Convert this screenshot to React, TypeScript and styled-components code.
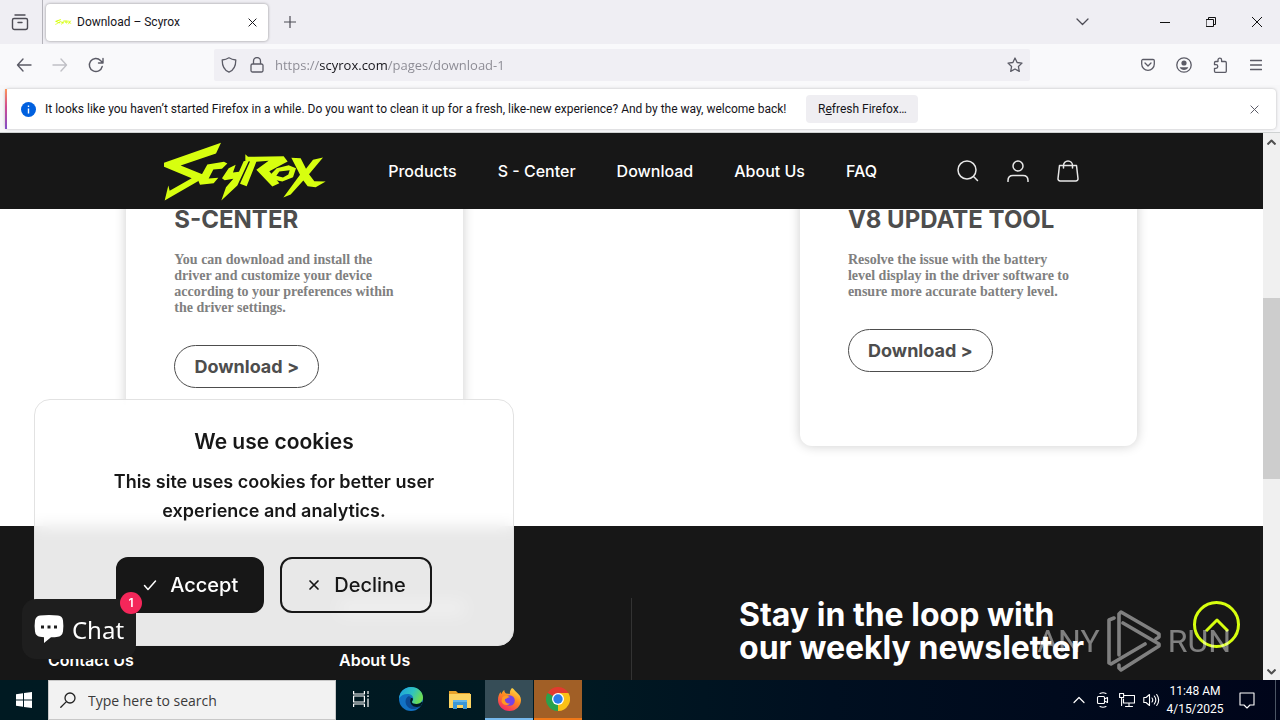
import React from 'react';
import styled, { createGlobalStyle } from 'styled-components';

const ui = "'Open Sans', 'Noto Sans', sans-serif";
const uiSmall = "Roboto, 'Open Sans', sans-serif";
const site = "Inter, 'Liberation Sans', sans-serif";
const lime = '#d7ff0f';

const GlobalStyle = createGlobalStyle`
  *, *::before, *::after { box-sizing: border-box; }
  body { margin: 0; font-family: ${ui}; overflow: hidden; }
  button, input { font: inherit; color: inherit; }
  button { border: 0; padding: 0; background: none; cursor: pointer; }
  a { color: inherit; text-decoration: none; }
  h1, h2, h3, p { margin: 0; }
  svg { display: block; flex: none; }
`;

const Desktop = styled.div`
  height: 100vh;
  display: flex;
  flex-direction: column;
  background: #f9f9fb;
`;

/* Browser chrome */

const TitleBar = styled.div`
  height: 44px;
  flex: none;
  display: flex;
  align-items: center;
  background: #efeef3;
  color: #4d4c55;
`;

const IconButton = styled.button<{ $w?: number; $color?: string }>`
  width: ${(p) => p.$w ?? 36}px;
  height: 100%;
  flex: none;
  display: flex;
  align-items: center;
  justify-content: center;
  color: ${(p) => p.$color ?? 'inherit'};
`;

const RecentTabs = styled.div`
  width: 43px;
  height: 100%;
  padding-right: 3px;
  border-right: 1px solid #b4b3ba;
`;

const Tab = styled.div`
  width: 222px;
  height: 37px;
  margin: 0 4px 0 3px;
  padding: 0 0 0 9px;
  display: flex;
  align-items: center;
  gap: 5px;
  border-radius: 4px;
  background: #fff;
  box-shadow: 0 0 3px rgba(0, 0, 0, 0.4);
  color: #15141a;
  font-family: ${uiSmall};
  font-size: 12px;
`;

const TabTitle = styled.span`
  flex: 1;
  white-space: nowrap;
`;

const Spacer = styled.div`
  flex: 1;
`;

const WindowControls = styled.div`
  height: 100%;
  margin-left: 30px;
  display: flex;
  color: #111;
`;

const NavBar = styled.div`
  height: 41px;
  flex: none;
  padding: 0 6px;
  display: flex;
  align-items: center;
  background: #f9f9fb;
  color: #5b5b66;
`;

const UrlBar = styled.div`
  flex: 1;
  height: 32px;
  margin: 0 100px;
  padding: 0 3px 0 1px;
  display: flex;
  align-items: center;
  border-radius: 2px;
  background: #f0eff4;
`;

const UrlInput = styled.input`
  flex: 1;
  min-width: 0;
  height: 24px;
  margin-left: 4px;
  padding: 0;
  border: 0;
  outline: 0;
  font-size: 13px;
  color: transparent;
  background: linear-gradient(90deg, #8a8992 44px, #15141a 44px, #15141a 113px, #8a8992 113px);
  background-clip: text;
  -webkit-background-clip: text;
`;

const NoticeBand = styled.div`
  flex: none;
  padding: 4px 4px 3px 5px;
  border-bottom: 1px solid #cfd2d2;
  background: #f7f7f9;
`;

const Notice = styled.div`
  height: 40px;
  padding: 0 4px 0 14px;
  display: flex;
  align-items: center;
  border-radius: 4px;
  border-left: 2px solid;
  border-image: linear-gradient(#ff9a56, #d04a92 45%, #7d4fc9) 1;
  background: #fff;
  box-shadow: 0 0 3px rgba(0, 0, 0, 0.25);
  color: #15141a;
  font-family: ${uiSmall};
  font-size: 12px;
  white-space: nowrap;
`;

const NoticeText = styled.p`
  margin: 0 20px 0 9px;
`;

const NoticeButton = styled.button`
  width: 112px;
  height: 28px;
  border-radius: 4px;
  background: #efeef2;
`;

/* Web page */

const Viewport = styled.div`
  flex: 1;
  min-height: 0;
  position: relative;
  display: flex;
  font-family: ${site};
`;

const Page = styled.div`
  flex: 1;
  min-width: 0;
  display: flex;
  flex-direction: column;
  overflow: hidden;
  background: #fff;
`;

const SiteHeader = styled.header`
  height: 76px;
  flex: none;
  position: relative;
  z-index: 2;
  padding: 0 13%;
  display: flex;
  align-items: center;
  background: #171717;
  color: #fff;
`;

const SiteNav = styled.nav`
  flex: 1;
  margin-left: 62px;
  display: flex;
  gap: 41px;
  font-size: 16px;
  font-weight: 500;
  white-space: nowrap;
`;

const HeaderIcons = styled.div`
  display: flex;
  height: 100%;
  margin-right: 6px;
  color: #e8e8e8;
`;

const Tools = styled.main`
  flex: none;
  margin-top: -40px;
  padding: 0 10% 80px;
  display: grid;
  grid-template-columns: repeat(3, 1fr);
`;

const ToolCard = styled.article<{ $col: number }>`
  grid-column: ${(p) => p.$col};
  padding: 36px 48px 58px;
  border-radius: 12px;
  box-shadow: 0 0 12px rgba(0, 0, 0, 0.2);
`;

const ToolTitle = styled.h2`
  line-height: 30px;
  font-size: 24px;
  font-weight: 700;
  color: #4d4d4d;
  white-space: nowrap;
`;

const ToolText = styled.p`
  margin: 17px 0 29px;
  padding-right: 12px;
  font-family: 'Liberation Serif', serif;
  font-size: 14px;
  font-weight: 700;
  line-height: 16px;
  color: #808080;
`;

const DownloadLink = styled.a`
  width: 145px;
  height: 43px;
  display: flex;
  align-items: center;
  justify-content: center;
  border: 1px solid #4d4d4d;
  border-radius: 22px;
  font-size: 18px;
  font-weight: 700;
  color: #4d4d4d;
`;

const Footer = styled.footer`
  flex: 1;
  padding: 72px 48px 0;
  display: flex;
  background: #171717;
  color: #fff;
`;

const FooterColumn = styled.div`
  width: 291px;
  padding-top: 2px;
`;

const FooterRule = styled.div<{ $w: number }>`
  width: ${(p) => p.$w}px;
  height: 16px;
  margin-bottom: 34px;
  background: #606060;
`;

const FooterLink = styled.a`
  display: block;
  font-size: 16px;
  font-weight: 600;
  line-height: 20px;
`;

const Newsletter = styled.div`
  flex: 1;
  margin-left: 1px;
  padding-left: 107px;
  border-left: 1px solid #333;
`;

const NewsletterTitle = styled.h2`
  font-size: 32px;
  font-weight: 700;
  line-height: 33px;
`;

const Scrollbar = styled.div`
  width: 17px;
  display: flex;
  flex-direction: column;
  align-items: center;
  background: #f0f0f0;
  color: #505050;
`;

const ScrollTrack = styled.div`
  flex: 1;
  width: 100%;
  padding-top: 148px;
`;

const ScrollThumb = styled.div`
  height: 181px;
  background: #cdcdcd;
`;

const ScrollArrow = styled.button`
  width: 17px;
  height: 17px;
  display: flex;
  align-items: center;
  justify-content: center;
`;

const CookieDialog = styled.section`
  position: absolute;
  left: 34px;
  bottom: 34px;
  z-index: 3;
  width: 480px;
  padding: 28px 40px 32px;
  border: 1px solid #e2e2e2;
  border-radius: 16px;
  background: rgba(255, 255, 255, 0.9);
  backdrop-filter: blur(8px);
  color: #171717;
  text-align: center;
`;

const CookieTitle = styled.h2`
  font-size: 21px;
  font-weight: 600;
  line-height: 28px;
`;

const CookieText = styled.p`
  margin: 11px 0 32px;
  padding: 0 30px;
  font-size: 18px;
  font-weight: 600;
  line-height: 29px;
`;

const CookieActions = styled.div`
  display: flex;
  justify-content: center;
  gap: 16px;
`;

const CookieButton = styled.button<{ $solid?: boolean }>`
  height: 56px;
  padding: 0 24px;
  display: flex;
  align-items: center;
  gap: 12px;
  border: 2px solid #171717;
  border-radius: 12px;
  background: ${(p) => (p.$solid ? '#171717' : 'transparent')};
  color: ${(p) => (p.$solid ? '#fff' : '#171717')};
  font-size: 20px;
  font-weight: 500;
`;

const ChatButton = styled.button`
  position: absolute;
  left: 22px;
  bottom: 21px;
  z-index: 4;
  width: 114px;
  height: 60px;
  display: flex;
  align-items: center;
  justify-content: center;
  gap: 8px;
  border-radius: 14px;
  background: #1e1e1e;
  color: #fff;
  font-family: 'Noto Sans', sans-serif;
  font-size: 24px;
`;

const ChatBadge = styled.span`
  position: absolute;
  top: -7px;
  right: -6px;
  width: 22px;
  height: 22px;
  border-radius: 50%;
  background: #f4275a;
  font-family: ${site};
  font-size: 12px;
  font-weight: 600;
  line-height: 22px;
  text-align: center;
`;

const BackToTop = styled.a`
  position: absolute;
  right: 40px;
  bottom: 32px;
  z-index: 2;
  width: 47px;
  height: 47px;
  display: flex;
  align-items: center;
  justify-content: center;
  border: 3px solid ${lime};
  border-radius: 50%;
  color: ${lime};
`;

const Watermark = styled.div`
  position: absolute;
  right: 49px;
  bottom: 8px;
  z-index: 5;
  height: 62px;
  display: flex;
  align-items: center;
  gap: 7px;
  color: #fff;
  opacity: 0.45;
  font-family: Roboto, sans-serif;
  font-size: 32px;
  font-weight: 400;
  line-height: 62px;
  pointer-events: none;
`;

/* Windows taskbar */

const Taskbar = styled.div`
  height: 40px;
  flex: none;
  display: flex;
  align-items: center;
  background: linear-gradient(90deg, #001a22 0%, #001922 45%, #000f20 65%, #00051a 100%);
  color: #fff;
`;

const SearchBox = styled.label`
  width: 288px;
  height: 40px;
  padding: 0 11px;
  display: flex;
  align-items: center;
  gap: 12px;
  border: 1px solid #c8c8c8;
  background: #f2f2f2;
  color: #222;
`;

const SearchInput = styled.input`
  flex: 1;
  min-width: 0;
  padding: 0;
  border: 0;
  outline: 0;
  background: transparent;
  font-size: 14px;
  &::placeholder { color: #3a3a3a; opacity: 1; }
`;

const TaskButton = styled.button<{ $w?: number; $bg?: string; $line?: string }>`
  width: ${(p) => p.$w ?? 48}px;
  height: 40px;
  margin-right: 1px;
  display: flex;
  align-items: center;
  justify-content: center;
  background: ${(p) => p.$bg ?? 'transparent'};
  border-bottom: 2px solid ${(p) => p.$line ?? 'transparent'};
`;

const Clock = styled.time`
  width: 64px;
  font-family: ${uiSmall};
  font-size: 12px;
  line-height: 18px;
  text-align: center;
  white-space: nowrap;
`;

const ShowDesktop = styled.div`
  width: 5px;
  height: 100%;
  margin-left: 8px;
  border-left: 1px solid #4b5564;
`;

type LineProps = { size?: number; h?: number; box?: string; w?: number; d: string; cap?: 'round' | 'butt' };

const Line = ({ size = 16, h, box = '0 0 16 16', w = 1.2, d, cap = 'round' }: LineProps) => (
  <svg width={size} height={h ?? size} viewBox={box} fill="none" stroke="currentColor" strokeWidth={w} strokeLinecap={cap} strokeLinejoin="round" aria-hidden="true">
    <path d={d} />
  </svg>
);

const Logo = ({ width }: { width: number }) => (
  <svg width={width} height={Math.round((width * 59) / 162)} viewBox="132 28 486 176" fill={lime} fillRule="evenodd" aria-hidden="true">
    <path d="M303 30 132 90v12l83 34-66 38-4-16-11 45 113-65v-14L182 98l106-36z" />
    <path d="m262 95 50-8 10 5-16 16-26 2-14 27 29-2-14 16-41 5-5-12z" />
    <path d="m326 106 21-10-8 23 18-2 14-32 17-4-36 77-48 45 14-40 22-25-26 4-8-6z" />
    <path d="m376 64 8 8 107-2 12 16-55 29 30 36-21 10-48-50 37-27-37 3-29 73-20-7 30-67-14-2z" />
    <path d="m470 106 36-9 22 9-9 27-32 13-33-7-5-11zm8 10-9 13 20 5 16-9 4-13z" />
    <path d="m514 75 28 1 16 32 21-27 30-7-42 50 16 21 34 1-30 17-24-3-13-17-38 42-22 9 50-68z" />
  </svg>
);

const EdgeIcon = () => (
  <svg width="24" height="24" viewBox="0 0 24 24" aria-hidden="true">
    <defs>
      <linearGradient id="edgeTop" x1="0" y1="0" x2="1" y2=".4">
        <stop offset="0" stopColor="#1b9de2" />
        <stop offset=".6" stopColor="#2fc3c0" />
        <stop offset="1" stopColor="#6bdc55" />
      </linearGradient>
    </defs>
    <circle cx="12" cy="12" r="12" fill="#1272c4" />
    <path d="M0 11.500C.5 5 5.500 0 12 0c7 0 12 5 12 10.500 0 4-3 6.500-6.500 6.500-3 0-4.500-1-4.500-2 0-.8 1.200-1.200 1.200-3.500C14.200 9 12 7 8.500 7 4.500 7 1.500 8.800 0 11.500z" fill="url(#edgeTop)" />
    <path d="M9 9.500c-3 2-3.500 7 0 10.500 3 3 8.500 2.600 12.500-.8C18 20.300 14 19.500 12 17c-1.600-2-1.500-4.500 0-6.300-.8-1.200-2-1.600-3-1.200z" fill="#0c4a94" />
    <path d="M14 11.500c0 2.200-1.100 2.600-1.100 3.500 0 1.200 1.800 2.100 4.600 2 2.200 0 4-.8 5.200-2.200l1 .8-2.200 3.600c-4 1.500-7.800.5-9.500-2.200-1.300-2-1-4.700 0-6.300z" fill="#001a22" />
  </svg>
);

const FolderIcon = () => (
  <svg width="22" height="19" viewBox="0 0 22 19" aria-hidden="true">
    <path d="M0 1h7l2 2h12v3H0z" fill="#e8a32a" />
    <path d="M0 4h22v14H0z" fill="#fcd462" />
    <path d="M4 10h14v9h-4v-4H8v4H4z" fill="#3a97d6" />
    <path d="M4 10h14v2H4z" fill="#62b5e8" />
  </svg>
);

const FirefoxIcon = () => (
  <svg width="23" height="23" viewBox="0 0 23 23" aria-hidden="true">
    <defs>
      <linearGradient id="foxBody" x1=".8" y1="0" x2=".25" y2="1">
        <stop offset="0" stopColor="#ffe14a" />
        <stop offset=".45" stopColor="#ff8a1e" />
        <stop offset="1" stopColor="#f5246a" />
      </linearGradient>
    </defs>
    <path d="M14 0c2 1 2.500 2.500 4 3.800 3 2.500 5 5 5 8.200C23 18 18 23 11.500 23S0 18 0 12c0-3.500 1-6 2.600-8 .1 1 .4 1.600.9 2C4 4 5 3 6.300 2c0 1.800.6 2.700 1.700 3.400 1.500 0 3 .2 4 .6C11.500 4 12.500 1.500 14 0z" fill="url(#foxBody)" />
    <circle cx="11.500" cy="12.500" r="5.300" fill="#7542e5" />
    <path d="M4.500 9c2.500-2 6-1.500 7.500.3-2.500 0-3 1.500-5 1.800C6.500 14 9 16 12 15.500c-3 3-8 1.500-8.500-2.500z" fill="#ff9a22" />
  </svg>
);

const ChromeIcon = () => (
  <svg width="24" height="24" viewBox="0 0 24 24" aria-hidden="true">
    <path d="M12 12 1.600 6A12 12 0 0 1 22.400 6z" fill="#e33b2e" />
    <path d="M12 12 22.400 6A12 12 0 0 1 12 24z" fill="#fbc116" />
    <path d="M12 12v12A12 12 0 0 1 1.600 6z" fill="#2aa24c" />
    <path d="M12 6h10.400L17 15l-5 9 5-9z" fill="#fbc116" />
    <circle cx="12" cy="12" r="6" fill="#fff" />
    <circle cx="12" cy="12" r="4.700" fill="#2b7de9" />
  </svg>
);

const tools = [
  { col: 1, title: 'S-CENTER', text: 'You can download and install the driver and customize your device according to your preferences within the driver settings.' },
  { col: 3, title: 'V8 UPDATE TOOL', text: 'Resolve the issue with the battery level display in the driver software to ensure more accurate battery level.' },
];

const BrowserChrome = () => (
  <>
    <TitleBar>
      <RecentTabs>
        <IconButton $w={39} aria-label="Recent browsing">
          <Line size={18} box="0 0 18 18" w={1.4} d="M4 2h10M3 5.500h12a1.500 1.500 0 0 1 1.500 1.500v7.500A2 2 0 0 1 14.500 16.500h-11a2 2 0 0 1-2-2V7A1.500 1.500 0 0 1 3 5.500zM7 9.500h4" />
        </IconButton>
      </RecentTabs>
      <Tab>
        <Logo width={17} />
        <TabTitle>Download – Scyrox</TabTitle>
        <IconButton $w={32} aria-label="Close tab"><Line size={9} box="0 0 10 10" w={1.1} d="m1 1 8 8M9 1 1 9" /></IconButton>
      </Tab>
      <IconButton aria-label="New tab"><Line size={12} box="0 0 12 12" d="M6 0v12M0 6h12" /></IconButton>
      <Spacer />
      <IconButton $w={60} aria-label="List all tabs"><Line size={13} h={8} box="0 0 13 8" w={1.3} d="m1 1 5.500 5.500L12 1" /></IconButton>
      <WindowControls>
        <IconButton $w={46} aria-label="Minimize"><Line size={10} box="0 0 10 10" w={1} cap="butt" d="M0 5.500h10" /></IconButton>
        <IconButton $w={46} aria-label="Restore"><Line size={10} box="0 0 10 10" w={1} d="M.5 2.500h7v7h-7zM2.500 2.500v-2h7v7h-2" /></IconButton>
        <IconButton $w={46} aria-label="Close"><Line size={10} box="0 0 10 10" w={1} d="m0 0 10 10M10 0 0 10" /></IconButton>
      </WindowControls>
    </TitleBar>
    <NavBar>
      <IconButton aria-label="Back"><Line w={1.4} d="M15 8H1.500M7 2 1.500 8 7 14" /></IconButton>
      <IconButton $color="#c0c0c6" aria-label="Forward"><Line w={1.4} d="M1 8h13.500M9 2l5.500 6L9 14" /></IconButton>
      <IconButton aria-label="Reload"><Line w={1.4} d="M14.200 9.500A6.500 6.500 0 1 1 12.500 3.400L15 6M15 1.500V6h-4.500" /></IconButton>
      <UrlBar>
        <IconButton $w={28} aria-label="Tracking protection"><Line size={16} w={1.3} d="M8 .8c2 1.300 4.200 2 6.800 2.200 0 6-1.800 10.200-6.800 12.200C3 13.200 1.200 9 1.200 3 3.800 2.800 6 2.100 8 .8z" /></IconButton>
        <IconButton $w={28} aria-label="Site information"><Line size={16} w={1.3} d="M3.500 7h9A1.500 1.500 0 0 1 14 8.500v5a1.500 1.500 0 0 1-1.500 1.500h-9A1.500 1.500 0 0 1 2 13.500v-5A1.500 1.500 0 0 1 3.500 7zM4.500 7V4a3.500 3.500 0 0 1 7 0v3" /></IconButton>
        <UrlInput aria-label="Address" defaultValue="https://scyrox.com/pages/download-1" />
        <IconButton $w={24} aria-label="Bookmark this page"><Line w={1.3} d="m8 1 2.100 4.500 4.900.6-3.600 3.400.9 4.900L8 12l-4.300 2.400.9-4.900L1 6.100l4.900-.6z" /></IconButton>
      </UrlBar>
      <IconButton aria-label="Save to Pocket"><Line size={14} h={16} box="0 0 14 16" w={1.3} d="M2 2.500h10A1.300 1.300 0 0 1 13.300 3.800V7A6.300 6.300 0 0 1 .7 7V3.800A1.300 1.300 0 0 1 2 2.500zM4 6l3 3 3-3" /></IconButton>
      <IconButton aria-label="Account">
        <svg width="16" height="16" viewBox="0 0 16 16" aria-hidden="true">
          <circle cx="8" cy="8" r="7.200" fill="none" stroke="currentColor" strokeWidth="1.300" />
          <circle cx="8" cy="6" r="2.600" fill="currentColor" />
          <path d="M3.700 10.200h8.600C11.500 12 10 13 8 13s-3.500-1-4.300-2.800z" fill="currentColor" />
        </svg>
      </IconButton>
      <IconButton aria-label="Extensions"><Line w={1.3} d="M6 4.500V3a1.800 1.800 0 0 1 3.600 0v1.500h3.500A1.200 1.200 0 0 1 14.300 5.700v8.600a1 1 0 0 1-1 1H3.500a1 1 0 0 1-1-1v-3H4a1.800 1.800 0 0 0 0-3.600H2.500V5.700A1.200 1.200 0 0 1 3.700 4.500z" /></IconButton>
      <IconButton aria-label="Application menu"><Line size={12} box="0 0 12 12" w={1.3} d="M.5 1.500h11M.5 6h11M.5 10.500h11" /></IconButton>
    </NavBar>
    <NoticeBand>
      <Notice>
        <svg width="15" height="15" viewBox="0 0 15 15" aria-hidden="true">
          <circle cx="7.500" cy="7.500" r="7.500" fill="#0060df" />
          <path d="M7.500 6.500v5M7.500 3.500v1.500" stroke="#fff" strokeWidth="1.400" />
        </svg>
        <NoticeText>It looks like you haven’t started Firefox in a while. Do you want to clean it up for a fresh, like-new experience? And by the way, welcome back!</NoticeText>
        <NoticeButton>R<u>e</u>fresh Firefox…</NoticeButton>
        <Spacer />
        <IconButton $color="#5b5b66" aria-label="Dismiss"><Line size={9} box="0 0 10 10" w={1.1} d="m1 1 8 8M9 1 1 9" /></IconButton>
      </Notice>
    </NoticeBand>
  </>
);

const TaskbarRow = () => (
  <Taskbar>
    <IconButton $w={48} aria-label="Start">
      <svg width="16" height="16" viewBox="0 0 16 16" fill="#fff" aria-hidden="true">
        <path d="M0 2.200 7 1.200v6.300H0zM8 1l8-1v7.500H8zM0 8.500h7v6.300l-7-1zM8 8.500h8V16l-8-1z" />
      </svg>
    </IconButton>
    <SearchBox>
      <Line size={16} w={1.3} d="M15 6a5 5 0 1 1-10 0 5 5 0 0 1 10 0zM6.400 9.600.8 15.200" />
      <SearchInput placeholder="Type here to search" aria-label="Type here to search" />
    </SearchBox>
    <TaskButton $w={50} aria-label="Task View"><Line size={17} h={16} box="0 0 17 16" w={1.2} cap="butt" d="M.6 0v3h10.800V0M.6 16v-3h10.800v3M.6 5h10.800v6H.6zM15 0v3M15 7.500V16M14 5.200h2" /></TaskButton>
    <TaskButton aria-label="Microsoft Edge"><EdgeIcon /></TaskButton>
    <TaskButton aria-label="File Explorer"><FolderIcon /></TaskButton>
    <TaskButton $bg="#364d57" $line="#76b9ed" aria-label="Firefox"><FirefoxIcon /></TaskButton>
    <TaskButton $bg="#a15f26" $line="#f07818" aria-label="Chrome"><ChromeIcon /></TaskButton>
    <Spacer />
    <IconButton $w={24} aria-label="Show hidden icons"><Line size={12} h={8} box="0 0 12 8" w={1.2} d="m1 6.500 5-5 5 5" /></IconButton>
    <IconButton $w={24} aria-label="Meet now"><Line size={14} h={16} box="0 0 14 16" w={1.1} d="M4 1.500q3-1.500 6 0M4 14.500q3 1.500 6 0M2.500 4.500h5a1 1 0 0 1 1 1v5a1 1 0 0 1-1 1h-5a1 1 0 0 1-1-1v-5a1 1 0 0 1 1-1zM8.500 7l3-1.500v5l-3-1.500" /></IconButton>
    <IconButton $w={24} aria-label="Network"><Line size={16} w={1.1} d="M5 3.500h10.500v7.500H4.500V7M10 11v3M6.500 14.500h7M.6 1.500h4v4h-4zM2.600 5.500v8" /></IconButton>
    <IconButton $w={24} aria-label="Volume"><Line size={17} h={16} box="0 0 17 16" w={1.1} d="M.8 5.500H3L6.500 2.500v11L3 10.500H.8zM9 6q1.500 2 0 4M11.300 4q3 4 0 8M13.700 2.500q4 5.500 0 11" /></IconButton>
    <Clock>11:48 AM<br />4/15/2025</Clock>
    <IconButton $w={40} aria-label="Notifications"><Line size={16} h={17} box="0 0 16 17" w={1.1} d="M1 1h14v12h-4l-3 3-3-3H1z" /></IconButton>
    <ShowDesktop />
  </Taskbar>
);

export default function App() {
  return (
    <Desktop>
      <GlobalStyle />
      <BrowserChrome />
      <Viewport>
        <Page>
          <SiteHeader>
            <a href="#home" aria-label="Scyrox"><Logo width={162} /></a>
            <SiteNav>
              {['Products', 'S - Center', 'Download', 'About Us', 'FAQ'].map((label) => (
                <a key={label} href="#nav">{label}</a>
              ))}
            </SiteNav>
            <HeaderIcons>
              <IconButton $w={50} aria-label="Search"><Line size={22} box="0 0 22 22" w={1.5} d="M19 10a9 9 0 1 1-18 0 9 9 0 0 1 18 0zM16.800 16.800l3.700 3.700" /></IconButton>
              <IconButton $w={50} aria-label="Account"><Line size={22} box="0 0 22 22" w={1.5} d="M16 6A5 5 0 1 1 6 6a5 5 0 0 1 10 0zM1 21.500v-1c0-3 2-5 5-5h10c3 0 5 2 5 5v1" /></IconButton>
              <IconButton $w={50} aria-label="Cart"><Line size={22} box="0 0 22 22" w={1.5} d="M2.500 5.500h17l1.500 13a2.200 2.200 0 0 1-2.200 2.500H3.200A2.200 2.200 0 0 1 1 18.500zM6.500 8V5.500a4.500 4.500 0 0 1 9 0V8" /></IconButton>
            </HeaderIcons>
          </SiteHeader>
          <Tools>
            {tools.map((tool) => (
              <ToolCard key={tool.title} $col={tool.col}>
                <ToolTitle>{tool.title}</ToolTitle>
                <ToolText>{tool.text}</ToolText>
                <DownloadLink href="#download">Download &gt;</DownloadLink>
              </ToolCard>
            ))}
          </Tools>
          <Footer>
            <FooterColumn>
              <FooterRule $w={0} />
              <FooterLink href="#contact">Contact Us</FooterLink>
            </FooterColumn>
            <FooterColumn>
              <FooterRule $w={126} />
              <FooterLink href="#about">About Us</FooterLink>
            </FooterColumn>
            <Newsletter>
              <NewsletterTitle>Stay in the loop with<br />our weekly newsletter</NewsletterTitle>
            </Newsletter>
          </Footer>
        </Page>
        <Scrollbar>
          <ScrollArrow aria-label="Scroll up"><Line size={9} h={6} box="0 0 9 6" w={2} cap="butt" d="m.5 5.500 4-4 4 4" /></ScrollArrow>
          <ScrollTrack><ScrollThumb /></ScrollTrack>
          <ScrollArrow aria-label="Scroll down"><Line size={9} h={6} box="0 0 9 6" w={2} cap="butt" d="m.5.5 4 4 4-4" /></ScrollArrow>
        </Scrollbar>
        <CookieDialog aria-label="Cookies">
          <CookieTitle>We use cookies</CookieTitle>
          <CookieText>This site uses cookies for better user experience and analytics.</CookieText>
          <CookieActions>
            <CookieButton $solid><Line size={16} w={1.5} d="m2.500 8.500 3.500 4 7.500-8.500" />Accept</CookieButton>
            <CookieButton><Line size={16} w={1.7} d="m4 4 8 8M12 4l-8 8" />Decline</CookieButton>
          </CookieActions>
        </CookieDialog>
        <ChatButton>
          <svg width="30" height="30" viewBox="0 0 30 30" aria-hidden="true">
            <path d="M6 1.500Q15 .3 24 1.500q4.500.7 5 5 .8 6 0 11-.8 4.600-5 5.200-3 .5-7 .6L10 29v-5.700l-4-.5q-4.400-.6-5-5.200-.8-5.500 0-11 .6-4.400 5-5.100z" fill="#fff" />
            <path d="M7 13h3M13.500 13h3M20 13h3" stroke="#1e1e1e" strokeWidth="3" />
          </svg>
          Chat
          <ChatBadge>1</ChatBadge>
        </ChatButton>
        <BackToTop href="#top" aria-label="Back to top"><Line size={24} h={14} box="0 0 24 14" w={3} cap="butt" d="M1 13 12 2l11 11" /></BackToTop>
        <Watermark>
          ANY
          <svg width="54" height="62" viewBox="0 0 54 62" fill="none" stroke="#fff" strokeWidth="3.600" strokeLinecap="round" strokeLinejoin="round" aria-hidden="true">
            <path d="M7 8 2 10v43l2 1 34-20M12 45V4l2-2 38 22v3l-3 2M16 13l36 21v2L14 60l-2-2v-3" />
          </svg>
          RUN
        </Watermark>
      </Viewport>
      <TaskbarRow />
    </Desktop>
  );
}
